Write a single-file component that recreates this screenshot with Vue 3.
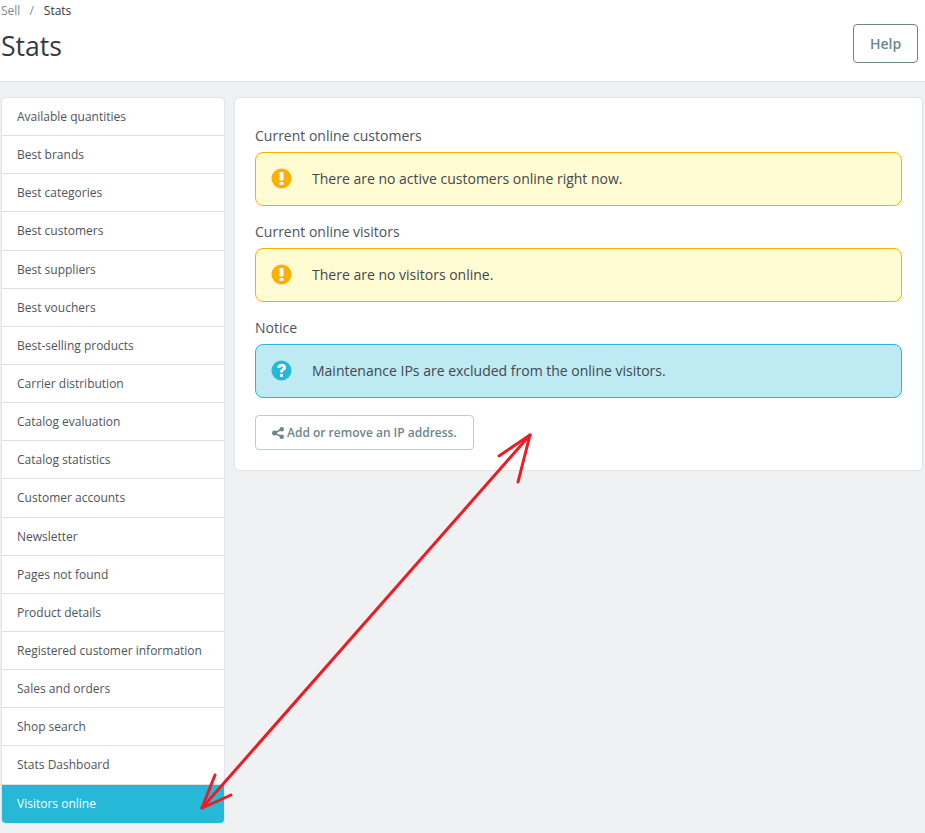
<script setup>
const items = [
  'Available quantities', 'Best brands', 'Best categories', 'Best customers', 'Best suppliers',
  'Best vouchers', 'Best-selling products', 'Carrier distribution', 'Catalog evaluation',
  'Catalog statistics', 'Customer accounts', 'Newsletter', 'Pages not found', 'Product details',
  'Registered customer information', 'Sales and orders', 'Shop search', 'Stats Dashboard', 'Visitors online'
]
</script>

<template>
  <div class="page">
    <header class="head">
      <div class="crumbs"><span class="sell">Sell</span><span class="slash">/</span><span class="cur">Stats</span></div>
      <div class="title-row">
        <h1>Stats</h1>
        <button class="help">Help</button>
      </div>
    </header>
    <div class="body">
      <nav class="side">
        <a v-for="it in items" :key="it" class="item" :class="{ active: it === 'Visitors online' }">{{ it }}</a>
      </nav>
      <main class="card">
        <h4>Current online customers</h4>
        <div class="alert warn">
          <svg class="ic" viewBox="0 0 22 22"><circle cx="11" cy="11" r="10.5" fill="#fbb000"/><rect x="8.9" y="4.2" width="4.2" height="9" rx="1" fill="#fff"/><rect x="8.9" y="14.6" width="4.2" height="3.2" rx="1" fill="#fff"/></svg>
          <span>There are no active customers online right now.</span>
        </div>
        <h4>Current online visitors</h4>
        <div class="alert warn">
          <svg class="ic" viewBox="0 0 22 22"><circle cx="11" cy="11" r="10.5" fill="#fbb000"/><rect x="8.9" y="4.2" width="4.2" height="9" rx="1" fill="#fff"/><rect x="8.9" y="14.6" width="4.2" height="3.2" rx="1" fill="#fff"/></svg>
          <span>There are no visitors online.</span>
        </div>
        <h4>Notice</h4>
        <div class="alert info">
          <svg class="ic" viewBox="0 0 22 22"><circle cx="11" cy="11" r="10.5" fill="#25b9d7"/><path d="M6.6 8.4C6.8 5.7 8.6 4 11.2 4c2.6 0 4.5 1.6 4.5 3.8 0 1.5-.8 2.4-2 3.2-.9.6-1.1.9-1.1 1.7v.4H9.5v-.7c0-1.4.5-2.2 1.6-3 .9-.6 1.3-1 1.3-1.5 0-.6-.5-1-1.2-1-.8 0-1.3.5-1.4 1.4z" fill="#fff"/><rect x="9.4" y="14.6" width="3.2" height="3.2" rx=".8" fill="#fff"/></svg>
          <span>Maintenance IPs are excluded from the online visitors.</span>
        </div>
        <button class="ip">
          <svg class="share" viewBox="0 0 12 12"><g fill="#6c868e"><circle cx="2.5" cy="6" r="2.5"/><circle cx="9.7" cy="2.3" r="2.3"/><circle cx="9.7" cy="9.7" r="2.3"/></g><path d="M2.5 6 9.7 2.3M2.5 6l7.2 3.7" stroke="#6c868e" stroke-width="1.7" fill="none"/></svg>
          <span>Add or remove an IP address.</span>
        </button>
      </main>
    </div>
    <svg class="arrow" viewBox="0 0 925 833" width="925" height="833">
      <g fill="none" stroke="#ed1c24" stroke-width="3" stroke-linecap="round">
        <path d="M530 435 202 808"/>
        <path d="M530 435 499 456M530 435 518 482"/>
        <path d="M202 808 215 775M202 808 231 795"/>
      </g>
    </svg>
  </div>
</template>

<style scoped>
.page {
  position: relative;
  width: 925px;
  height: 833px;
  overflow: hidden;
  background: #eff1f2;
  font-family: "Open Sans", "Liberation Sans", sans-serif;
  color: #363a41;
}
.head {
  box-sizing: border-box;
  height: 82px;
  padding: 2px 7px 0 1px;
  background: #fff;
  border-bottom: 1px solid #dfe3e6;
}
.crumbs {
  display: flex;
  font-size: 12px;
  line-height: 17px;
}
.sell { color: #7f8a8e; }
.slash { margin: 0 10px 0 9px; color: #7f8a8e; }
.cur { color: #363a41; }
.title-row {
  display: flex;
  justify-content: space-between;
  align-items: flex-start;
}
h1 {
  margin: 8px 0 0;
  font-size: 26.6px;
  line-height: 38px;
  font-weight: 400;
  color: #363a41;
}
.help {
  box-sizing: border-box;
  width: 65px;
  height: 39px;
  margin-top: 5px;
  padding: 0;
  background: #fff;
  border: 1px solid #6c868e;
  border-radius: 4px;
  color: #6c868e;
  font: 600 14px "Open Sans", sans-serif;
}
.body {
  display: flex;
  align-items: flex-start;
  gap: 11px;
  padding: 16px 3px 0 2px;
}
.side {
  display: flex;
  flex-direction: column;
  flex: 0 0 222px;
  background: #fff;
  border-radius: 4px;
  box-shadow: 0 0 2px rgba(0, 0, 0, .2);
  overflow: hidden;
}
.item {
  box-sizing: border-box;
  height: 38.15px;
  padding: 0 15px;
  display: flex;
  align-items: center;
  font-size: 12px;
  color: #4f545c;
  border-bottom: 1px solid #dfdfdf;
}
.item.active {
  background: #25b9d7;
  color: #fff;
  border-bottom: 0;
}
.card {
  box-sizing: border-box;
  flex: 1;
  height: 372px;
  padding: 27px 20px 0;
  background: #fff;
  border-radius: 4px;
  box-shadow: 0 0 2px rgba(0, 0, 0, .2);
}
h4 {
  margin: 0 0 6px;
  font-size: 14px;
  line-height: 21px;
  font-weight: 400;
  color: #4f545c;
}
.alert {
  box-sizing: border-box;
  height: 54px;
  margin-bottom: 15px;
  padding: 0 15px 1px;
  display: flex;
  align-items: center;
  gap: 20px;
  font-size: 14px;
  color: #43474e;
  border: 1px solid;
  border-radius: 8px;
}
.warn { background: #fffbd3; border-color: #fbb000; }
.info { background: #bdeaf3; border-color: #25b9d7; }
.ic { width: 21px; height: 21px; flex: none; }
.ip {
  display: flex;
  align-items: center;
  gap: 3px;
  box-sizing: border-box;
  width: 219px;
  height: 35px;
  margin-top: 17px;
  padding: 0 0 0 16px;
  background: #fff;
  border: 1px solid #bbcdd2;
  border-radius: 4px;
  color: #6c868e;
  font: 600 12px "Open Sans", sans-serif;
}
.share { width: 12px; height: 12px; flex: none; }
.arrow {
  position: absolute;
  left: 0;
  top: 0;
  pointer-events: none;
}
</style>
